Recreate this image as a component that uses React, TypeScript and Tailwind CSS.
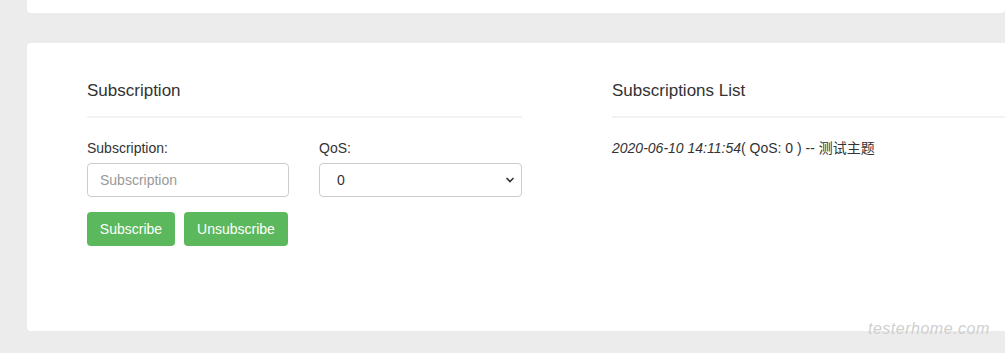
import React from "react";

export default function App() {
  return (
    <div
      className="relative w-[1005px] h-[353px] bg-[#ececec] overflow-hidden text-[#333]"
      style={{ fontFamily: '"Liberation Sans", Arial, "Noto Sans CJK SC", sans-serif' }}
    >
      <div className="ml-[27px] h-[13px] bg-white rounded-b-[4px]" />
      <div className="ml-[27px] mt-[30px] h-[288px] w-[1000px] bg-white rounded-[4px] pl-[60px] pt-[35px] flex">
        <div className="w-[435px] shrink-0">
          <h3 className="text-[17px] leading-[26px] h-[26px]">Subscription</h3>
          <div className="mt-[12px] h-[2px] bg-[#f2f2f2]" />
          <div className="mt-[20px] flex gap-[30px]">
            <div className="w-[202px]">
              <label className="block text-[14px] leading-[20px]">Subscription:</label>
              <input
                placeholder="Subscription"
                className="mt-[5px] block w-full h-[34px] border border-[#ccc] rounded-[4px] px-[12px] text-[14px] placeholder:text-[#999] outline-none"
              />
            </div>
            <div className="w-[203px]">
              <label className="block text-[14px] leading-[20px]">QoS:</label>
              <div className="relative mt-[5px]">
                <select className="appearance-none block w-full h-[34px] border border-[#ccc] rounded-[4px] pl-[17px] text-[14px] bg-white outline-none">
                  <option>0</option>
                  <option>1</option>
                  <option>2</option>
                </select>
                <svg
                  className="absolute right-[7px] top-[13px] pointer-events-none"
                  width="10"
                  height="8"
                  viewBox="0 0 10 8"
                  fill="none"
                >
                  <path d="M1.5 2 L5 5.5 L8.5 2" stroke="#333" strokeWidth="1.6" />
                </svg>
              </div>
            </div>
          </div>
          <div className="mt-[15px] flex gap-[9px]">
            <button className="h-[34px] w-[88px] bg-[#5cb85c] text-white text-[14px] rounded-[4px]">Subscribe</button>
            <button className="h-[34px] w-[104px] bg-[#5cb85c] text-white text-[14px] rounded-[4px]">Unsubscribe</button>
          </div>
        </div>
        <div className="ml-[90px] flex-1">
          <h3 className="text-[17px] leading-[26px] h-[26px]">Subscriptions List</h3>
          <div className="mt-[12px] h-[2px] bg-[#f2f2f2]" />
          <p className="mt-[20px] text-[14px] leading-[20px]">
            <i>2020-06-10 14:11:54</i>( QoS: 0 ) -- 测试主题
          </p>
        </div>
      </div>
      <div className="absolute left-[868px] top-[319px] text-[16px] leading-[20px] text-[#cfcfcf] italic tracking-[0.5px] whitespace-nowrap">
        testerhome.com
      </div>
    </div>
  );
}
